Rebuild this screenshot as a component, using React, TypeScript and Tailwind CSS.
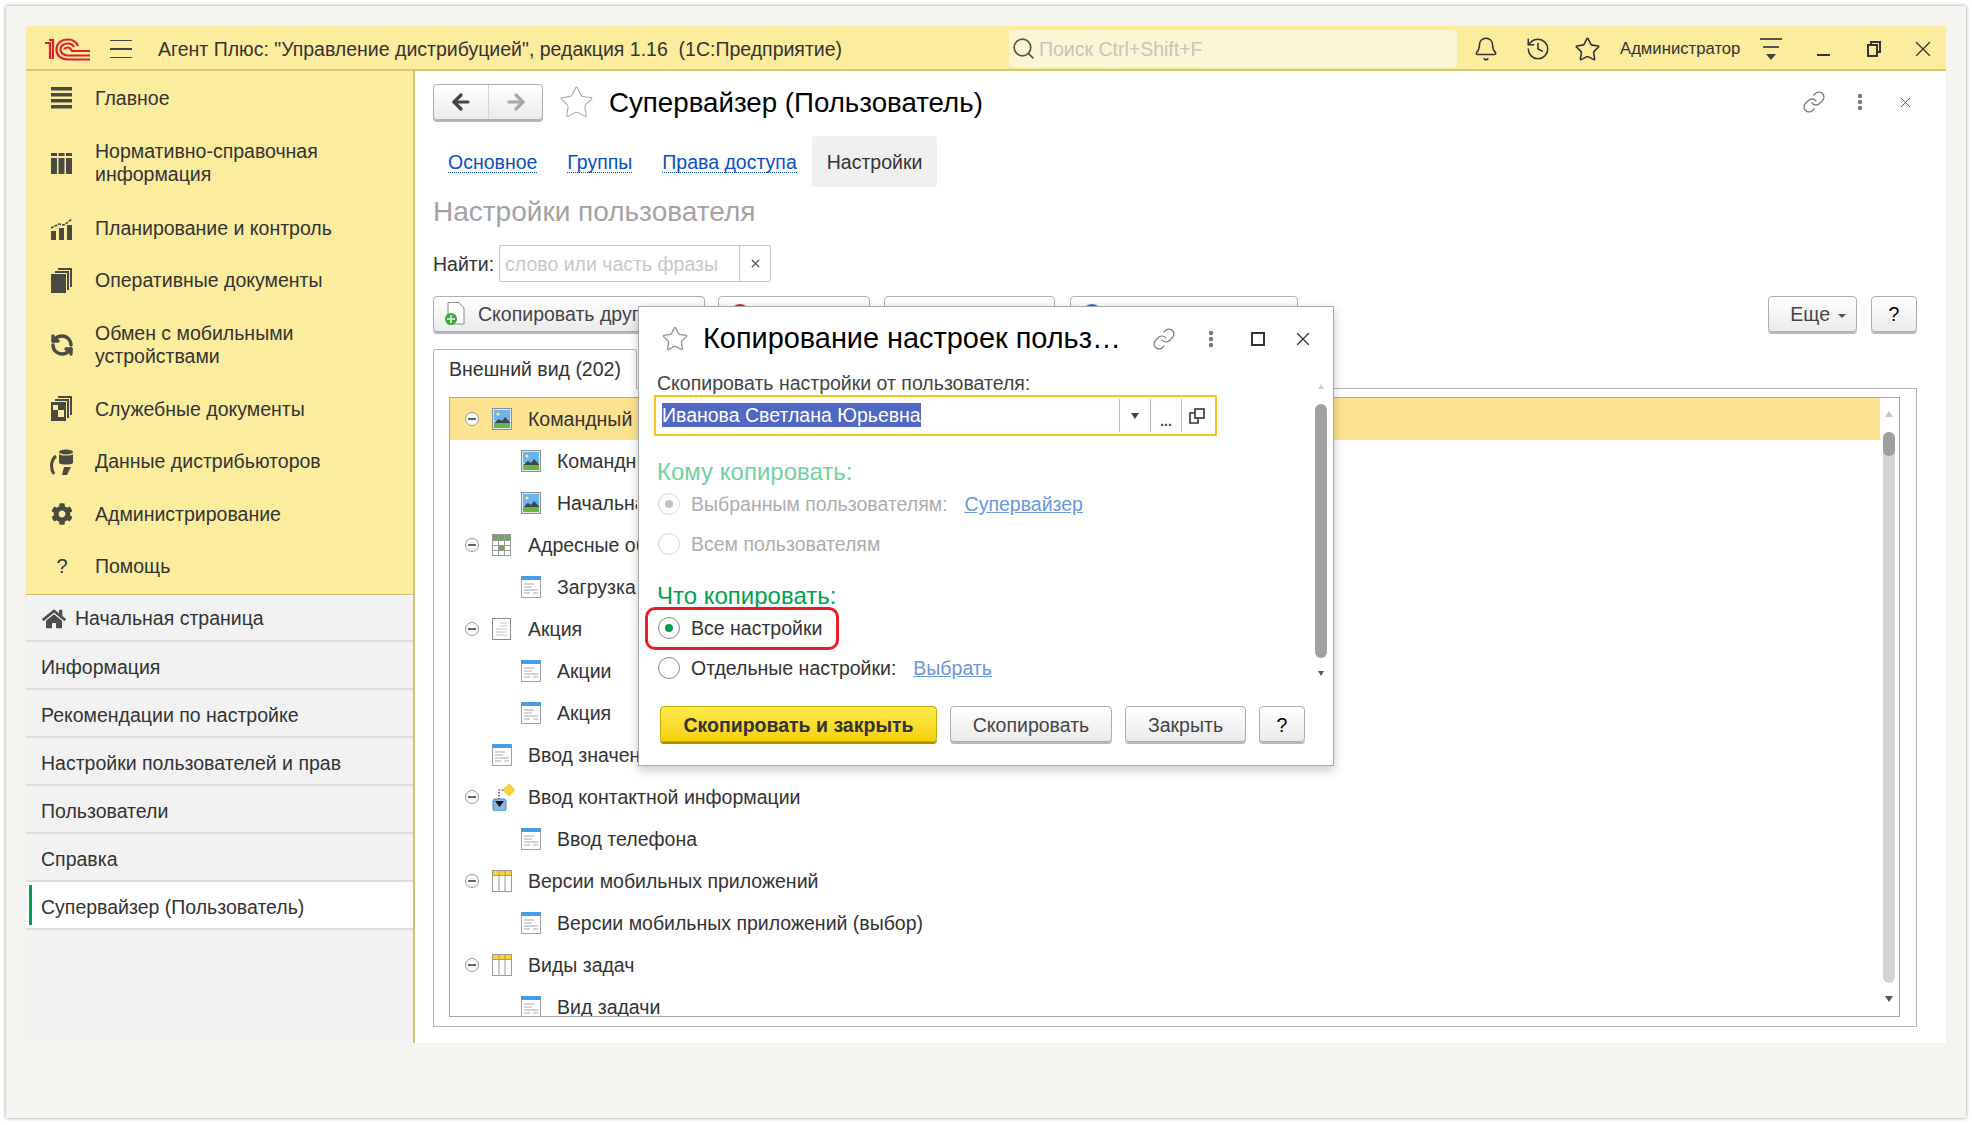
import type { ReactNode } from "react";
import { ArrowLeft, ArrowRight, Bell, History, Link, RefreshCcw, Search, Star, X } from "lucide-react";
import { FaCog, FaHome } from "react-icons/fa";

const IconBars = () => (
  <svg width="22" height="22" viewBox="0 0 22 22" fill="#4a4a40">
    <rect y="0" width="21" height="3.5" />
    <rect y="6" width="21" height="3.5" />
    <rect y="12" width="21" height="3.5" />
    <rect y="18" width="21" height="3.5" />
  </svg>
);

const IconColumns = () => (
  <svg width="22" height="22" viewBox="0 0 22 22" fill="#4a4a40">
    <rect x="0" y="1" width="6" height="3" />
    <rect x="7.5" y="1" width="6" height="3" />
    <rect x="15" y="1" width="6" height="3" />
    <rect x="0" y="6" width="6" height="16" />
    <rect x="7.5" y="6" width="6" height="16" />
    <rect x="15" y="6" width="6" height="16" />
  </svg>
);

const IconPlanning = () => (
  <svg width="22" height="22" viewBox="0 0 22 22" fill="#4a4a40">
    <rect x="0" y="13" width="5" height="9" />
    <rect x="8" y="10" width="5" height="12" />
    <rect x="16" y="7" width="5" height="15" />
    <path d="M0 10 L8 6 L13 7 L21 1" fill="none" stroke="#4a4a40" strokeWidth="1.6" strokeDasharray="3 1" />
  </svg>
);

const IconDocs = ({ inner }: { inner?: boolean }) => (
  <svg width="22" height="26" viewBox="0 0 22 26" fill="#4a4a40">
    <path d="M7 0 H21 V19 H19 V2 H7 Z" />
    <path d="M4 3 H18 V22 H16 V5 H4 Z" />
    <rect x="0" y="6" width="15" height="19" />
    {inner && <rect x="7" y="14" width="6" height="7" fill="#fbec9e" />}
    {inner && <rect x="2" y="9" width="5" height="5" fill="#fbec9e" />}
  </svg>
);

const IconDistributors = () => (
  <svg width="24" height="26" viewBox="0 0 24 26" fill="#4a4a40">
    <ellipse cx="16" cy="3" rx="7" ry="2.5" />
    <path d="M9 5 C11 7 21 7 23 5 V14 C21 16 11 16 9 14 Z" />
    <path d="M6 7 C1 11 0 19 4 25" fill="none" stroke="#4a4a40" strokeWidth="3" />
    <path d="M14 18 H21 L17 26 H12 Z" />
  </svg>
);

const Picture = () => (
  <svg width="20" height="22" viewBox="0 0 20 22">
    <rect x="0.5" y="0.5" width="19" height="21" fill="#dbe6ef" stroke="#8a9199" />
    <rect x="2" y="2" width="16" height="11" fill="#6db4ee" />
    <circle cx="6" cy="6" r="1.6" fill="#fff05a" />
    <path d="M2 15 L7 11 L10 13 L13 9 L18 14 V16 H2 Z" fill="#3c4752" />
    <rect x="2" y="15" width="16" height="5" fill="#6db33f" />
  </svg>
);

const FormIcon = () => (
  <svg width="20" height="22" viewBox="0 0 20 22">
    <rect x="0.5" y="0.5" width="19" height="21" fill="#fff" stroke="#9aa3ad" />
    <rect x="0" y="0" width="20" height="4" rx="1" fill="#4a9be8" />
    <path d="M3 8 H13 M3 11 H11 M3 14 H13 M3 17 H9" stroke="#a8a8a8" strokeWidth="1" />
    <path d="M12 14 H17 M12 17 H17" stroke="#c8c8c8" strokeWidth="1.5" />
  </svg>
);

const GridIcon = () => (
  <svg width="19" height="22" viewBox="0 0 19 22">
    <rect x="0.5" y="0.5" width="18" height="21" fill="#fff" stroke="#9a9a9a" />
    <rect x="1" y="1" width="17" height="5" fill="#6fa84e" />
    <rect x="7" y="11" width="5" height="5" fill="#6fa84e" />
    <path d="M6.5 0 V22 M12.5 0 V22 M0 6.5 H19 M0 11.5 H19 M0 16.5 H19" stroke="#9a9a9a" strokeWidth="1" />
  </svg>
);

const DocIcon = () => (
  <svg width="19" height="22" viewBox="0 0 19 22">
    <rect x="0.5" y="0.5" width="18" height="21" fill="#fff" stroke="#8c8c8c" />
    <path d="M8 5 H15 M8 8 H15 M4 11 H15 M4 14 H15 M4 17 H15" stroke="#c6c6c6" strokeWidth="1" />
  </svg>
);

const TableIcon = () => (
  <svg width="20" height="22" viewBox="0 0 20 22">
    <rect x="0.5" y="0.5" width="19" height="21" fill="#fff" stroke="#9a9a9a" />
    <rect x="1" y="1" width="18" height="4" fill="#fbd32a" />
    <path d="M7 0 V22 M13 0 V22 M0 5.5 H20" stroke="#9a9a9a" strokeWidth="1" />
  </svg>
);

const ContactIcon = () => (
  <svg width="24" height="27" viewBox="0 0 24 27">
    <path d="M17 0 L23 6 L17 12 L11 6 Z" fill="#f6d32d" stroke="#c9a70e" strokeWidth="0.5" />
    <path d="M11 6 H7 V16" fill="none" stroke="#222" strokeWidth="1.2" strokeDasharray="1.5 1.5" />
    <rect x="1" y="15" width="13" height="12" rx="2" fill="#86b8e3" stroke="#4f86b5" />
    <path d="M3 17 H12 L7.5 23 Z" fill="#111" />
  </svg>
);

const Kebab = ({ color = "#777" }: { color?: string }) => (
  <svg width="6" height="18" viewBox="0 0 6 18" fill={color}>
    <circle cx="3" cy="3" r="2.2" />
    <circle cx="3" cy="9" r="2.2" />
    <circle cx="3" cy="15" r="2.2" />
  </svg>
);

const Logo = () => (
  <svg width="45" height="23" viewBox="0 0 45 23" fill="none" stroke="#d8232a" strokeWidth="2.2">
    <path d="M0 5 H5 V21" />
    <path d="M8 1 V21" />
    <path d="M4 2 H8" />
    <path d="M33 8 C31 3 27 1.5 23 1.5 C16 1.5 11.5 5.5 11.5 11.5 C11.5 17.5 16 21.5 23 21.5 H45" />
    <path d="M29 9 C28 7 26 5.5 23 5.5 C19 5.5 15.5 8 15.5 11.5 C15.5 15 19 17.5 23 17.5 H45" />
    <path d="M19.5 11.5 C19.5 10 21 9.5 23 9.5 C25 9.5 26 11 27 13 H45" />
  </svg>
);

const menu: { label: ReactNode; icon: ReactNode; h: string }[] = [
  { label: "Главное", icon: <IconBars />, h: "h-[52.4px]" },
  { label: <>Нормативно-справочная<br />информация</>, icon: <IconColumns />, h: "h-[78px]" },
  { label: "Планирование и контроль", icon: <IconPlanning />, h: "h-[52.4px]" },
  { label: "Оперативные документы", icon: <IconDocs />, h: "h-[52.4px]" },
  { label: <>Обмен с мобильными<br />устройствами</>, icon: <RefreshCcw size={24} strokeWidth={3.4} color="#4a4a40" />, h: "h-[76px]" },
  { label: "Служебные документы", icon: <IconDocs inner />, h: "h-[52.4px]" },
  { label: "Данные дистрибьюторов", icon: <IconDistributors />, h: "h-[52.4px]" },
  { label: "Администрирование", icon: <FaCog size={22} color="#4a4a40" />, h: "h-[52.4px]" },
  { label: "Помощь", icon: <span className="text-[20px] text-[#333]">?</span>, h: "h-[52.4px]" },
];

const openTabs = ["Информация", "Рекомендации по настройке", "Настройки пользователей и прав", "Пользователи", "Справка"];

const tree = [
  { label: "Командный интерфейс", level: 1, icon: <Picture />, active: true, cut: true },
  { label: "Командный интерфейс", level: 2, icon: <Picture />, cut: true },
  { label: "Начальная страница", level: 2, icon: <Picture />, cut: true },
  { label: "Адресные объекты", level: 1, icon: <GridIcon />, cut: true },
  { label: "Загрузка адресов", level: 2, icon: <FormIcon />, cut: true },
  { label: "Акция", level: 1, icon: <DocIcon /> },
  { label: "Акции", level: 2, icon: <FormIcon /> },
  { label: "Акция", level: 2, icon: <FormIcon /> },
  { label: "Ввод значений", level: 1, icon: <FormIcon />, leaf: true, cut: true },
  { label: "Ввод контактной информации", level: 1, icon: <ContactIcon /> },
  { label: "Ввод телефона", level: 2, icon: <FormIcon /> },
  { label: "Версии мобильных приложений", level: 1, icon: <TableIcon /> },
  { label: "Версии мобильных приложений (выбор)", level: 2, icon: <FormIcon /> },
  { label: "Виды задач", level: 1, icon: <TableIcon /> },
  { label: "Вид задачи", level: 2, icon: <FormIcon /> },
];

const Radio = ({ on, dim }: { on?: boolean; dim?: boolean }) => (
  <span
    className={`flex h-[22px] w-[22px] shrink-0 items-center justify-center rounded-full border ${
      dim ? "border-[#d8d8d8]" : "border-[#8a8a8a]"
    } bg-white`}
  >
    {on && <span className={`h-[8px] w-[8px] rounded-full ${dim ? "bg-[#c4c4c4]" : "bg-[#00a04e]"}`} />}
  </span>
);

const btn =
  "flex h-[36px] items-center rounded-[4px] border border-[#adadad] bg-linear-to-b from-white to-[#ebebeb] shadow-[0_2px_0_#b8b8b8] text-[19.5px] text-[#444]";

const App = () => {
  return (
    <div className="relative h-[1125px] w-[1972px] overflow-hidden bg-white pl-[6px] pt-[6px] font-['Liberation_Sans',Arial,sans-serif]">
      <div className="h-[1112px] w-[1960px] bg-[#f5f4f1] pl-[20px] pt-[20px] shadow-[0_0_4px_#9a9a9a]">
        <div className="flex h-[1017px] w-[1920px] flex-col bg-white">
          {/* Header */}
          <header className="flex h-[45px] shrink-0 items-center border-b-2 border-[#d6c66e] bg-[#fbec9e] pt-[3px] text-[#333]">
            <div className="ml-[19px]">
              <Logo />
            </div>
            <div className="ml-[20px] flex w-[22px] flex-col gap-[7px]">
              <span className="h-[1.5px] bg-[#444]" />
              <span className="h-[1.5px] bg-[#444]" />
              <span className="h-[1.5px] bg-[#444]" />
            </div>
            <div className="ml-[26px] w-[851px] whitespace-pre pt-[1px] text-[19.5px]">
              Агент Плюс: "Управление дистрибуцией", редакция 1.16  (1С:Предприятие)
            </div>
            <div className="-mt-[2px] flex h-[37px] w-[448px] items-center gap-[3px] rounded-[2px] bg-[#fcf5d3] pl-[2px] text-[19.5px] text-[#c4c4c0]">
              <Search size={25} strokeWidth={1.6} color="#555" />
              <span className="pt-[3px]">Поиск Ctrl+Shift+F</span>
            </div>
            <Bell size={26} strokeWidth={1.4} className="ml-[16px]" />
            <History size={26} strokeWidth={1.4} className="ml-[26px]" />
            <Star size={27} strokeWidth={1.4} className="ml-[23px]" />
            <span className="ml-[19px] text-[16.7px]">Администратор</span>
            <div className="ml-[20px] flex w-[22px] flex-col items-center gap-[6px]">
              <span className="h-[2px] w-full bg-[#555]" />
              <span className="h-[2px] w-[16px] bg-[#555]" />
              <span className="border-x-[5px] border-t-[6px] border-x-transparent border-t-[#444]" />
            </div>
            <span className="ml-[35px] mt-[12px] h-[2.5px] w-[13px] bg-[#333]" />
            <svg width="14" height="16" viewBox="0 0 14 16" fill="none" stroke="#333" strokeWidth="2" className="ml-[37px]">
              <rect x="1" y="4" width="9" height="11" />
              <path d="M4 4 V1 H13 V11 H10" />
            </svg>
            <X size={26} strokeWidth={1.2} className="ml-[29px]" />
          </header>

          <div className="flex min-h-0 flex-1">
            {/* Sidebar */}
            <aside className="flex w-[389px] shrink-0 flex-col border-r-2 border-[#cdc27a] bg-[#f2f2f2]">
              <nav className="border-b border-[#cdc27a] bg-[#fbec9e] pb-[1px] pt-px text-[19.5px] leading-[23px] text-[#333]">
                {menu.map((item, i) => (
                  <div key={i} className={`flex items-center ${item.h}`}>
                    <span className="flex w-[69px] shrink-0 justify-center pl-[3px]">{item.icon}</span>
                    <span>{item.label}</span>
                  </div>
                ))}
              </nav>
              <div className="text-[19.5px] text-[#333]">
                <div className="flex h-[47px] items-center gap-[9px] border-b-2 border-[#dcdcdc] pl-[16px] pt-[3px]">
                  <FaHome size={24} color="#4d4d4d" />
                  Начальная страница
                </div>
                {openTabs.map((t) => (
                  <div key={t} className="flex h-[48px] items-center border-b-2 border-[#dcdcdc] pl-[15px] pt-[5px]">
                    {t}
                  </div>
                ))}
                <div className="flex h-[48px] items-center border-b-2 border-[#dcdcdc] bg-white py-[3px] pl-[3px]">
                  <span className="mr-[9px] h-full w-[3px] bg-[#00a04e]" />
                  <span className="pt-[5px]">Супервайзер (Пользователь)</span>
                </div>
              </div>
            </aside>

            {/* Content */}
            <main className="flex min-w-0 flex-1 flex-col pl-[18px] pr-[29px] pt-[13px] text-[19.5px] text-[#333]">
              <div className="flex h-[36px] shrink-0 items-center">
                <div className={`${btn} w-[110px]`}>
                  <span className="flex h-full w-[55px] items-center justify-center border-r border-[#d4d4d4]">
                    <ArrowLeft size={24} strokeWidth={3.2} color="#444" />
                  </span>
                  <span className="flex h-full flex-1 items-center justify-center">
                    <ArrowRight size={24} strokeWidth={3.2} color="#a8a8a8" />
                  </span>
                </div>
                <Star size={37} strokeWidth={0.7} color="#a8a8a8" className="ml-[15px]" />
                <h1 className="ml-[14px] pt-[2px] text-[27.7px] font-normal text-black">Супервайзер (Пользователь)</h1>
                <div className="ml-auto flex items-center text-[#777]">
                  <Link size={24} strokeWidth={1.3} />
                  <span className="ml-[31px]">
                    <Kebab />
                  </span>
                  <X size={17} strokeWidth={1.4} className="ml-[34px] mr-[3px] text-[#555]" />
                </div>
              </div>

              <div className="mt-[16px] flex h-[51px] shrink-0">
                {["Основное", "Группы", "Права доступа"].map((t) => (
                  <a key={t} className="flex items-center px-[15px] pt-[2px]">
                    <span className="border-b border-dotted border-[#0b4fc4] leading-[20px] text-[#0b4fc4]">{t}</span>
                  </a>
                ))}
                <span className="flex items-center rounded-[3px] bg-[#f0f0f0] px-[15px] pt-[2px]">Настройки</span>
              </div>

              <div className="mt-[8px] h-[34px] shrink-0 text-[28px] leading-[34px] text-[#a3a3a3]">Настройки пользователя</div>

              <div className="mt-[16px] flex h-[37px] shrink-0 items-center gap-[5px]">
                <span className="pt-[2px]">Найти:</span>
                <div className="flex h-full w-[272px] items-center rounded-[2px] border border-[#c4c4c4] text-[#c8c8c8]">
                  <span className="flex-1 pl-[5px] pt-[2px]">слово или часть фразы</span>
                  <span className="flex h-full w-[31px] items-center justify-center border-l border-[#c4c4c4]">
                    <X size={13} strokeWidth={2.4} color="#555" />
                  </span>
                </div>
              </div>

              <div className="mt-[14px] flex shrink-0">
                <div className={`${btn} w-[272px] gap-[13px] pl-[11px]`}>
                  <svg width="20" height="24" viewBox="0 0 20 24" className="shrink-0">
                    <path d="M3 .5 H14 L19 6 V22 H3 Z" fill="#fff" stroke="#8c8c8c" />
                    <circle cx="6" cy="17" r="6" fill="#3aa935" />
                    <path d="M6 13 V21 M2 17 H10" stroke="#fff" strokeWidth="1.4" />
                  </svg>
                  <span className="w-[161px] shrink-0 overflow-hidden whitespace-nowrap pt-[2px]">Скопировать другим</span>
                </div>
                <div className={`${btn} ml-[13px] w-[152px] pl-[11px]`}>
                  <span className="h-[20px] w-[20px] rounded-full bg-[#d8232a]" />
                </div>
                <div className={`${btn} ml-[14px] w-[171px]`} />
                <div className={`${btn} ml-[15px] w-[228px] pl-[11px]`}>
                  <span className="h-[20px] w-[20px] rounded-full bg-[#2f6fc0]" />
                </div>
                <div className={`${btn} ml-auto w-[89px] justify-end gap-[8px] pr-[10px] pt-[2px]`}>
                  Еще
                  <span className="mt-[2px] border-x-[4px] border-t-[4px] border-x-transparent border-t-[#555]" />
                </div>
                <div className={`${btn} ml-[14px] w-[46px] justify-center pt-[2px] text-black`}>?</div>
              </div>

              {/* Tabs */}
              <div className="relative z-10 mt-[17px] flex h-[39px] shrink-0">
                <div className="flex h-[40px] w-[204px] items-center justify-center rounded-t-[3px] border border-b-0 border-[#b5b5b5] bg-white">
                  Внешний вид (202)
                </div>
                <div className="ml-[2px] h-[39px] w-[40px] rounded-t-[3px] border border-b-0 border-[#b5b5b5] bg-[#f5f5f5]" />
              </div>

              <div className="h-[639px] shrink-0 border border-[#b5b5b5] pb-[9px] pl-[15px] pr-[16px] pt-[8px]">
                <div className="flex h-full overflow-hidden border border-[#a8a8a8]">
                  <ul className="w-[1430px] shrink-0">
                    {tree.map((row, i) => (
                      <li
                        key={i}
                        className={`flex h-[42px] items-center whitespace-nowrap ${row.active ? "bg-[#fde391]" : ""} ${
                          row.level === 1 ? "pl-[15px]" : "pl-[71px]"
                        }`}
                      >
                        {row.level === 1 &&
                          (row.leaf ? (
                            <span className="w-[14px]" />
                          ) : (
                            <span className="flex h-[14px] w-[14px] items-center justify-center rounded-full border border-[#999] bg-white">
                              <span className="h-[1.5px] w-[8px] bg-[#666]" />
                            </span>
                          ))}
                        <span className={`mr-[12px] flex w-[24px] shrink-0 ${row.level === 1 ? "ml-[13px]" : ""}`}>{row.icon}</span>
                        <span className={`pt-[2px] ${row.cut ? `overflow-hidden ${row.level === 1 ? "w-[110px]" : "w-[80px]"}` : ""}`}>
                          {row.label}
                        </span>
                      </li>
                    ))}
                  </ul>
                  <div className="ml-[3px] flex w-[12px] flex-col items-center pt-[13px]">
                    <span className="border-x-[4px] border-b-[6px] border-x-transparent border-b-[#c4c4c4]" />
                    <div className="mt-[15px] h-[551px] w-full shrink-0 rounded-full bg-[#d4d4d4]">
                      <div className="h-[24px] rounded-full bg-[#9e9e9e]" />
                    </div>
                    <span className="mt-[13px] border-x-[4px] border-t-[6px] border-x-transparent border-t-[#555]" />
                  </div>
                </div>
              </div>
            </main>
          </div>
        </div>
      </div>

      {/* Dialog */}
      <div className="absolute left-[638px] top-[306px] z-20 flex h-[460px] w-[696px] flex-col border border-[#a8a8a8] bg-white text-[19.5px] text-[#333] shadow-[0_4px_10px_rgba(0,0,0,0.22)]">
        <div className="mb-[2px] flex h-[64px] shrink-0 items-center">
          <Star size={28} strokeWidth={1.2} color="#999" className="ml-[22px]" />
          <h2 className="ml-[14px] w-[419px] whitespace-nowrap text-[28.9px] font-normal text-black">Копирование настроек польз…</h2>
          <Link size={24} strokeWidth={1.2} color="#777" className="ml-[30px]" />
          <span className="ml-[32px]">
            <Kebab />
          </span>
          <span className="ml-[37px] h-[14px] w-[14px] border-2 border-[#333]" />
          <X size={22} strokeWidth={1.3} className="ml-[27px] text-[#333]" />
        </div>

        <div className="flex h-[315px] shrink-0">
          <div className="w-[676px] shrink-0 pl-[18px]">
            <div className="h-[20px] leading-[20px] text-[#444]">Скопировать настройки от пользователя:</div>
            <div className="-ml-[3px] mt-[2px] flex h-[41px] w-[563px] items-center border-2 border-[#f7c61b] pl-[6px]">
              <span className="w-[457px] shrink-0">
                <span className="bg-[#5068c4] py-[1px] text-white">Иванова Светлана Юрьевна</span>
              </span>
              <span className="flex h-[33px] w-[31px] items-center justify-center border-l border-[#b8b8b8]">
                <span className="border-x-[4px] border-t-[6px] border-x-transparent border-t-[#444]" />
              </span>
              <span className="flex h-[33px] w-[31px] items-end justify-center border-l border-[#b8b8b8] pb-[4px] text-[14px] font-bold leading-[14px] text-[#444]">
                ...
              </span>
              <span className="flex h-[33px] w-[31px] items-center justify-center border-l border-[#b8b8b8]">
                <svg width="16" height="16" viewBox="0 0 16 16" fill="none" stroke="#333" strokeWidth="1.6">
                  <rect x="6" y="1" width="9" height="9" />
                  <path d="M6 5 H1 V15 H9 V10" />
                </svg>
              </span>
            </div>
            <div className="mt-[22px] h-[28px] text-[24px] leading-[28px] text-[#72d29c]">Кому копировать:</div>
            <div className="-mt-[2px] flex h-[40px] items-center gap-[11px] pl-[1px] text-[#adadad]">
              <Radio on dim />
              <span className="pt-[2px]">Выбранным пользователям:</span>
              <span className="ml-[6px] pt-[2px] text-[#6a96dc] underline">Супервайзер</span>
            </div>
            <div className="flex h-[40px] items-center gap-[11px] pl-[1px] text-[#adadad]">
              <Radio dim />
              <span className="pt-[2px]">Всем пользователям</span>
            </div>
            <div className="mt-[18px] h-[28px] text-[24px] leading-[28px] text-[#00a04e]">Что копировать:</div>
            <div className="-mt-[2px] flex h-[40px] items-center gap-[11px] pl-[1px]">
              <Radio on />
              <span className="pt-[2px]">Все настройки</span>
            </div>
            <div className="flex h-[40px] items-center gap-[11px] pl-[1px]">
              <Radio />
              <span className="pt-[2px]">Отдельные настройки:</span>
              <span className="ml-[6px] pt-[2px] text-[#6a96dc] underline">Выбрать</span>
            </div>
          </div>
          <div className="flex w-[12px] flex-col items-center pt-[11px]">
            <span className="border-x-[3px] border-b-[5px] border-x-transparent border-b-[#d0d0d0]" />
            <div className="mt-[15px] h-[254px] w-full shrink-0 rounded-full bg-[#a0a0a0]" />
            <span className="mt-[13px] border-x-[3px] border-t-[5px] border-x-transparent border-t-[#555]" />
          </div>
        </div>

        <div className="mt-[18px] flex pl-[21px]">
          <div className="flex h-[36px] w-[277px] items-center justify-center rounded-[4px] border border-[#c9a800] bg-linear-to-b from-[#fdeb4a] to-[#f5d000] pt-[3px] font-bold text-[#333] shadow-[0_2px_0_#a89000]">
            Скопировать и закрыть
          </div>
          <div className={`${btn} ml-[13px] w-[162px] justify-center pt-[3px]`}>Скопировать</div>
          <div className={`${btn} ml-[13px] w-[121px] justify-center pt-[3px]`}>Закрыть</div>
          <div className={`${btn} ml-[13px] w-[46px] justify-center pt-[3px] text-black`}>?</div>
        </div>

        {/* Red callout around the selected option */}
        <div className="absolute left-[6px] top-[300px] h-[43px] w-[194px] rounded-[10px] border-[3.5px] border-[#ec1c24]" />
      </div>
    </div>
  );
};

export default App;
